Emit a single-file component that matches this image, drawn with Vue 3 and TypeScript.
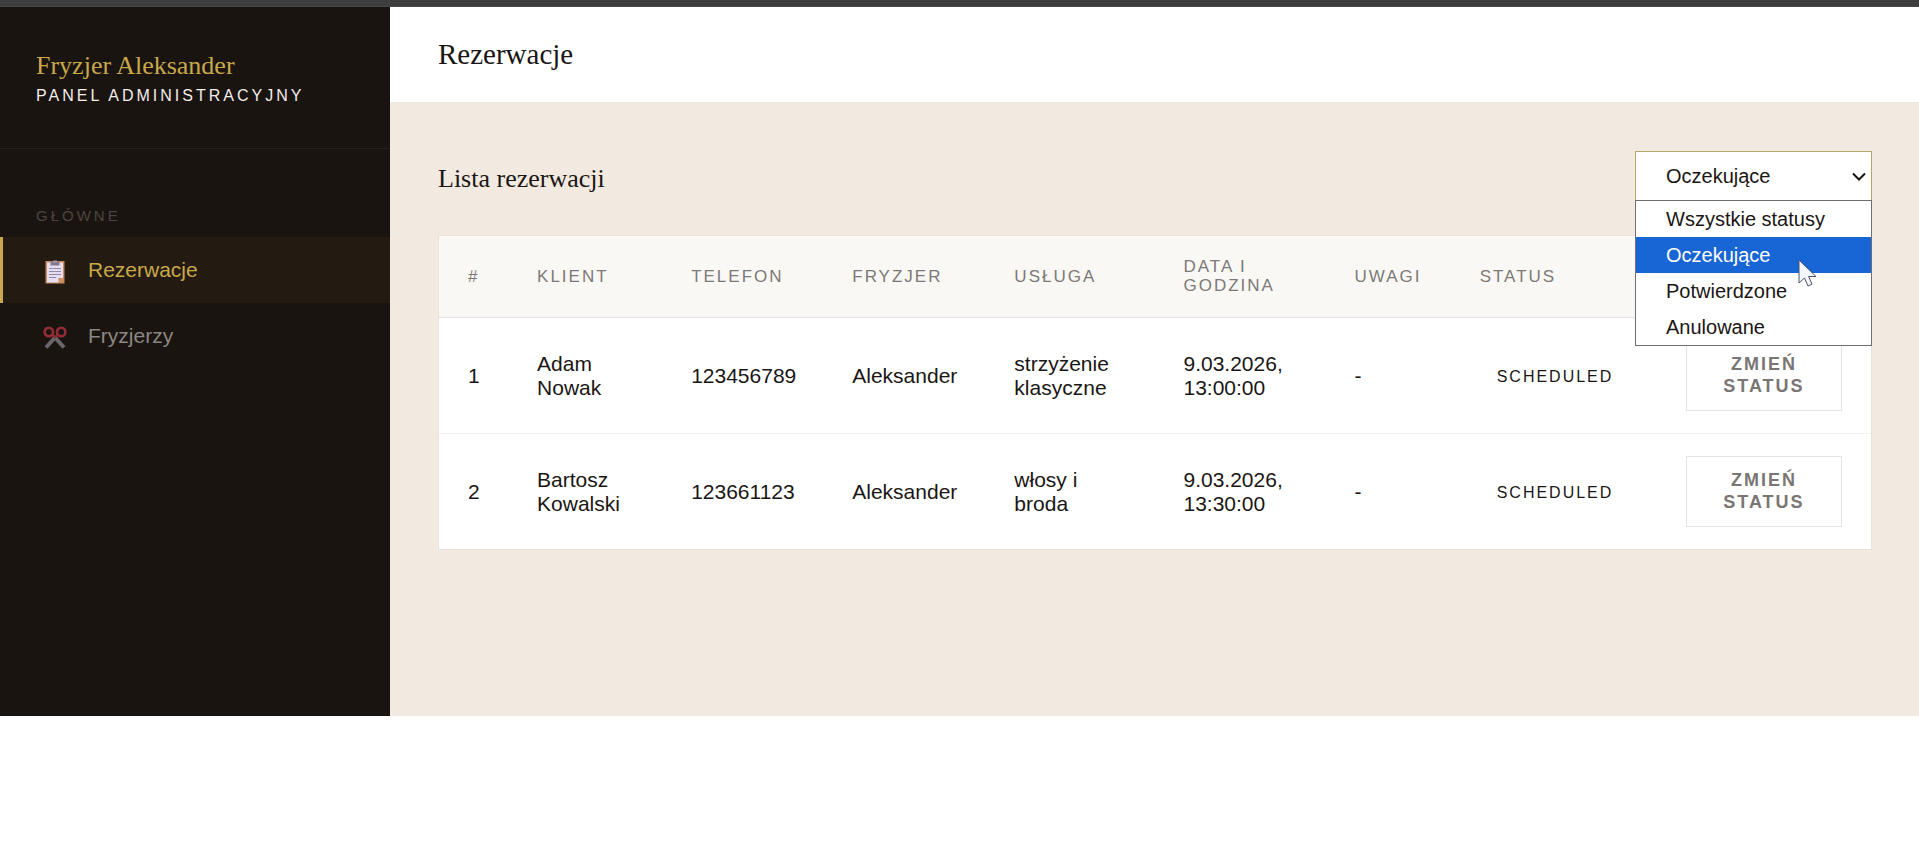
<script setup lang="ts">
import { ref } from 'vue'

interface Booking {
  id: number
  client: string
  phone: string
  barber: string
  service: string
  date: string
  notes: string
  status: string
}

interface StatusOption {
  value: string
  label: string
}

const bookings: Booking[] = [
  {
    id: 1,
    client: 'Adam Nowak',
    phone: '123456789',
    barber: 'Aleksander',
    service: 'strzyżenie klasyczne',
    date: '9.03.2026, 13:00:00',
    notes: '-',
    status: 'scheduled',
  },
  {
    id: 2,
    client: 'Bartosz Kowalski',
    phone: '123661123',
    barber: 'Aleksander',
    service: 'włosy i broda',
    date: '9.03.2026, 13:30:00',
    notes: '-',
    status: 'scheduled',
  },
]

const columns: string[] = ['#', 'Klient', 'Telefon', 'Fryzjer', 'Usługa', 'Data i godzina', 'Uwagi', 'Status']

const options: StatusOption[] = [
  { value: 'all', label: 'Wszystkie statusy' },
  { value: 'pending', label: 'Oczekujące' },
  { value: 'confirmed', label: 'Potwierdzone' },
  { value: 'cancelled', label: 'Anulowane' },
]

const selected = ref('pending')
const open = ref(true)

function choose(value: string) {
  selected.value = value
  open.value = false
}
</script>

<template>
  <div class="page">
    <div class="strip"></div>
    <div class="shell">
      <aside class="sidebar">
        <div class="brand">
          <div class="brand-name">Fryzjer Aleksander</div>
          <div class="brand-sub">Panel administracyjny</div>
        </div>
        <nav class="nav">
          <div class="nav-label">Główne</div>
          <a href="#rezerwacje" class="nav-item active">
            <svg class="nav-icon" viewBox="0 0 24 24" aria-hidden="true">
              <rect x="2.5" y="1" width="19" height="22.5" fill="#c98a5c" />
              <path d="M4 2.500h16V18l-4.500 4.500H4z" fill="#e6def0" />
              <path d="M20 18h-4.500v4.500z" fill="#c98a5c" />
              <path d="M7.500 1.500h9v4h-9z" fill="#85788c" />
              <path d="M10 .5h4v2h-4z" fill="#a397a8" />
              <path d="M6 8.500h12M6 11.500h12M6 14.500h12M6 17.500h7" stroke="#8f89a3" stroke-width="1" />
            </svg>
            <span>Rezerwacje</span>
          </a>
          <a href="#fryzjerzy" class="nav-item">
            <svg class="nav-icon" viewBox="0 0 24 24" aria-hidden="true">
              <path d="M12 11.500 21 21.500M12 11.500 3 21.500" stroke="#68666a" stroke-width="4" fill="none" />
              <circle cx="5.800" cy="6" r="4.200" stroke="#942c36" stroke-width="2.600" fill="none" />
              <circle cx="18.200" cy="6" r="4.200" stroke="#942c36" stroke-width="2.600" fill="none" />
              <path d="M9.500 8.500 12 11.500l2.500-3" stroke="#942c36" stroke-width="2.200" fill="none" />
            </svg>
            <span>Fryzjerzy</span>
          </a>
        </nav>
      </aside>

      <div class="main">
        <header class="topbar">
          <h1>Rezerwacje</h1>
        </header>

        <main class="content">
          <div class="toolbar">
            <h2>Lista rezerwacji</h2>
            <div class="filter">
              <select v-model="selected" class="filter-select" aria-label="Status rezerwacji">
                <option v-for="o in options" :key="o.value" :value="o.value">{{ o.label }}</option>
              </select>
              <svg class="chevron" viewBox="0 0 14 9" aria-hidden="true">
                <path d="M1 1.500 7 7.500l6-6" fill="none" stroke="#1a1410" stroke-width="2" />
              </svg>
              <ul v-if="open" class="menu" role="listbox">
                <li
                  v-for="o in options"
                  :key="o.value"
                  role="option"
                  class="menu-item"
                  :class="{ chosen: o.value === selected }"
                  :aria-selected="o.value === selected"
                  @click="choose(o.value)"
                >
                  {{ o.label }}
                </li>
              </ul>
              <svg v-if="open" class="pointer" viewBox="0 0 19 28" aria-hidden="true">
                <path
                  d="M1 1v23l5.500-5 3.500 8 4-1.800-3.400-7.700H18z"
                  fill="#f3f8ff"
                  stroke="#4a5568"
                  stroke-width="1"
                />
              </svg>
            </div>
          </div>

          <div class="card">
            <table>
              <colgroup>
                <col class="c-id" />
                <col class="c-client" />
                <col class="c-phone" />
                <col class="c-barber" />
                <col class="c-service" />
                <col class="c-date" />
                <col class="c-notes" />
                <col class="c-status" />
                <col class="c-action" />
              </colgroup>
              <thead>
                <tr>
                  <th v-for="c in columns" :key="c" scope="col">{{ c }}</th>
                  <td></td>
                </tr>
              </thead>
              <tbody>
                <tr v-for="b in bookings" :key="b.id">
                  <td>{{ b.id }}</td>
                  <td>{{ b.client }}</td>
                  <td>{{ b.phone }}</td>
                  <td>{{ b.barber }}</td>
                  <td>{{ b.service }}</td>
                  <td>{{ b.date }}</td>
                  <td>{{ b.notes }}</td>
                  <td><span class="badge">{{ b.status }}</span></td>
                  <td><button type="button" class="change">Zmień status</button></td>
                </tr>
              </tbody>
            </table>
          </div>
        </main>
      </div>
    </div>
  </div>
</template>

<style>
body {
  margin: 0;
  background: #fff;
}
</style>

<style scoped>
.page {
  font-family: 'Liberation Sans', Arial, sans-serif;
  color: #1a1614;
}

.strip {
  height: 7px;
  box-sizing: border-box;
  background: #3e3e3e;
  border-bottom: 1px solid #4a4846;
}

.shell {
  display: flex;
  min-height: 709px;
}

.sidebar {
  flex: 0 0 390px;
  background: #1a1410;
}

.brand {
  padding: 44px 36px 42px;
  border-bottom: 1px solid #26211d;
}

.brand-name {
  font: 26px/30px 'Liberation Serif', 'Times New Roman', serif;
  color: #c9a84c;
}

.brand-sub {
  margin-top: 5px;
  font-size: 16px;
  line-height: 20px;
  letter-spacing: 3px;
  text-transform: uppercase;
  color: #f3eeea;
}

.nav {
  padding-top: 57px;
}

.nav-label {
  padding: 0 36px 11px;
  font-size: 15px;
  line-height: 20px;
  letter-spacing: 3px;
  text-transform: uppercase;
  color: #4a4541;
}

.nav-item {
  display: flex;
  align-items: center;
  gap: 21px;
  height: 66px;
  box-sizing: border-box;
  padding: 0 36px 0 40px;
  border-left: 3px solid transparent;
  font-size: 21px;
  line-height: 24px;
  color: #8c8784;
  text-decoration: none;
}

.nav-item.active {
  border-left-color: #c9a84c;
  background: #231b12;
  color: #c9a84c;
}

.nav-icon {
  width: 24px;
  height: 24px;
  margin-top: 4px;
}

.main {
  flex: 1;
  min-width: 0;
  background: #f2eae0;
}

.topbar {
  padding: 30px 48px 31px;
  background: #fff;
}

h1,
h2 {
  margin: 0;
  font-family: 'Liberation Serif', 'Times New Roman', serif;
  font-weight: 400;
}

h1 {
  font-size: 29px;
  line-height: 34px;
}

h2 {
  padding-top: 6px;
  font-size: 26px;
  line-height: 30px;
}

.content {
  padding: 49px 47px 48px 48px;
}

.toolbar {
  display: flex;
  align-items: center;
  justify-content: space-between;
  margin-bottom: 34px;
}

.filter {
  position: relative;
  width: 237px;
}

.filter-select {
  display: block;
  width: 100%;
  height: 50px;
  padding: 0 30px;
  appearance: none;
  border: 1px solid #b8a56a;
  border-radius: 0;
  outline: none;
  background: #fff;
  font-family: inherit;
  font-size: 20px;
  color: #1a1614;
}

.chevron {
  position: absolute;
  top: 21px;
  right: 6px;
  width: 14px;
  height: 9px;
  pointer-events: none;
}

.menu {
  position: absolute;
  z-index: 2;
  top: 49px;
  left: 0;
  right: 0;
  margin: 0;
  padding: 0;
  border: 1px solid #6f6f73;
  background: #fff;
  list-style: none;
}

.menu-item {
  padding: 0 30px;
  font-size: 20px;
  line-height: 36px;
}

.menu-item.chosen {
  background: #1865d6;
  color: #fff;
}

.pointer {
  position: absolute;
  z-index: 3;
  top: 108px;
  right: 55px;
  width: 19px;
  height: 28px;
  pointer-events: none;
}

.card {
  border: 1px solid #e9e3da;
  background: #fff;
}

table {
  width: 100%;
  table-layout: fixed;
  border-collapse: collapse;
}

.c-id {
  width: 69px;
}
.c-client {
  width: 154px;
}
.c-phone {
  width: 161px;
}
.c-barber {
  width: 162px;
}
.c-service {
  width: 169px;
}
.c-date {
  width: 171px;
}
.c-notes {
  width: 125px;
}
.c-status {
  width: 206px;
}
.c-action {
  width: 214px;
}

thead tr {
  background: #faf8f5;
  border-bottom: 1px solid #e5e3e0;
}

th {
  padding: 21px 29px 22px;
  font-size: 17px;
  font-weight: 400;
  line-height: 19px;
  letter-spacing: 2px;
  text-align: left;
  text-transform: uppercase;
  color: #7d7977;
}

tbody td {
  padding: 22px 29px;
  font-size: 21px;
  line-height: 24px;
}

tbody tr + tr {
  border-top: 1px solid #f3f2f1;
}

.badge {
  padding: 0 17px;
  font-size: 16px;
  letter-spacing: 2px;
  text-transform: uppercase;
}

.change {
  display: block;
  width: 100%;
  padding: 12px 28px 13px;
  border: 1px solid #e3e3e3;
  background: #fff;
  font-family: inherit;
  font-size: 18px;
  font-weight: 700;
  line-height: 22px;
  letter-spacing: 2px;
  text-transform: uppercase;
  color: #7a7674;
}
</style>
